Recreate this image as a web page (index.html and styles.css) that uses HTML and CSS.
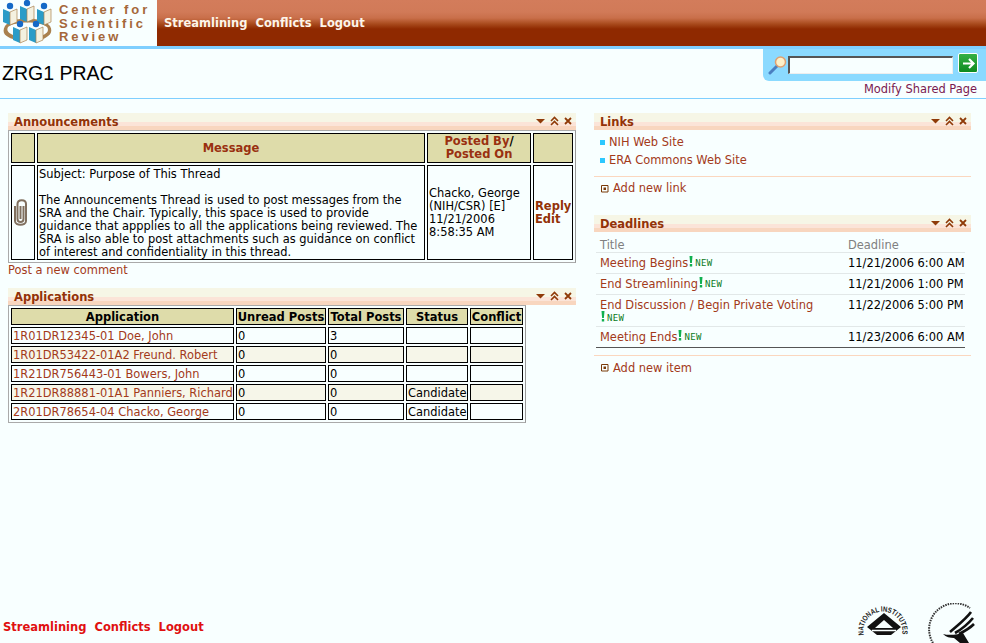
FILE: index.html
```html
<!DOCTYPE html>
<html lang="en">
<head>
<meta charset="utf-8">
<title>ZRG1 PRAC</title>
<link rel="stylesheet" href="styles.css">
</head>
<body>
<svg class="defs" width="0" height="0" aria-hidden="true">
  <defs>
    <g id="book">
      <path d="M0 3 L7 6 V19 L0 16Z" fill="#2a9cc8"/>
      <path d="M7 6 L14 3 V16 L7 19Z" fill="#f4f1e0" stroke="#a9814f" stroke-width=".7"/>
      <circle cx="7" cy="0" r="3.200" fill="#1569c7"/>
    </g>
    <g id="menu"><path d="M0 3h9l-4.500 4.500z" fill="#8f3a08"/></g>
    <g id="ups"><path d="M1 5l3.500-3.500L8 5M1 9l3.500-3.500L8 9" fill="none" stroke="#8f3a08" stroke-width="1.600"/></g>
    <g id="cls"><path d="M1 2l6 6M7 2l-6 6" fill="none" stroke="#8f3a08" stroke-width="1.800"/></g>
    <g id="plus"><path d="M.5.500h6.500v6.500h-6.500z" fill="none" stroke="#7b3a08"/><path d="M2.500 2.500h2.500v2.500h-2.500z" fill="#7b3a08"/></g>
    <g id="bang"><path d="M.5 0h3l-.6 7H1.100z M.8 8h2.400v2.500H.8z" fill="#10b050"/></g>
  </defs>
</svg>

<header class="topbar">
  <div class="logo">
    <svg class="logo-mark" width="54" height="46" viewBox="0 0 54 46">
      <path d="M5 26 C12 16 42 16 50 26 C54 33 48 37 43 39 L43 35 C48 33 49 30 47 27 C40 21 15 21 8 27 C6 31 9 33 13 35 L13 39 C6 37 1 33 5 26Z" fill="#a9814f"/>
      <use href="#book" x="3" y="6"/>
      <use href="#book" x="20" y="3"/>
      <use href="#book" x="37" y="6"/>
      <use href="#book" x="13" y="24"/>
      <use href="#book" x="29" y="24"/>
    </svg>
    <div class="logo-text">Center for<br>Scientific<br>Review</div>
  </div>
  <nav class="topnav">
    <a href="#">Streamlining</a>
    <a href="#">Conflicts</a>
    <a href="#">Logout</a>
  </nav>
</header>

<section class="titlebar">
  <h1 class="page-title">ZRG1 PRAC</h1>
  <div class="title-tools">
    <form class="search">
      <svg width="20" height="20" viewBox="0 0 20 20">
        <path d="M2 18 L9 11" stroke="#4a7fc0" stroke-width="3" stroke-linecap="round"/>
        <circle cx="12.500" cy="7" r="5" fill="#fdf0c8" stroke="#e0a070" stroke-width="1.500"/>
      </svg>
      <input class="search-input" type="text" aria-label="Search">
      <span class="go">
        <svg width="17" height="17" viewBox="0 0 17 17"><path d="M3 8.500h10M9 4l4.500 4.500L9 13" fill="none" stroke="#fff" stroke-width="2.200"/></svg>
      </span>
    </form>
    <a class="modify" href="#">Modify Shared Page</a>
  </div>
</section>

<main class="columns">
  <div class="col-left">
    <section class="part">
      <div class="part-head">
        <span>Announcements</span>
        <span class="part-icons">
          <svg width="9" height="10"><use href="#menu"/></svg>
          <svg width="9" height="10"><use href="#ups"/></svg>
          <svg width="9" height="10"><use href="#cls"/></svg>
        </span>
      </div>
      <div class="frame">
        <table class="grid ann">
          <tr class="ann-head">
            <th class="c-clip"></th>
            <th class="c-msg">Message</th>
            <th class="c-post">Posted By<span class="slash">/</span><br>Posted On</th>
            <th class="c-act"></th>
          </tr>
          <tr class="ann-row">
            <td class="clip">
              <svg width="15" height="27" viewBox="0 0 15 27">
                <path d="M2 7 V22 C2 27 13 27 13 22 V5 C13 0 4.500 0 4.500 5 V20 C4.500 24 10.500 24 10.500 20 V7 M7.500 7 V20" fill="none" stroke="#80705f" stroke-width="2"/>
              </svg>
            </td>
            <td>Subject: Purpose of This Thread<br><br>The Announcements Thread is used to post messages from the SRA and the Chair. Typically, this space is used to provide guidance that appplies to all the applications being reviewed. The SRA is also able to post attachments such as guidance on conflict of interest and confidentiality in this thread.</td>
            <td>Chacko, George (NIH/CSR) [E]<br>11/21/2006<br>8:58:35 AM</td>
            <td class="actions"><a href="#">Reply</a><br><a href="#">Edit</a></td>
          </tr>
        </table>
      </div>
      <a class="post-link" href="#">Post a new comment</a>
    </section>

    <section class="part part-apps">
      <div class="part-head">
        <span>Applications</span>
        <span class="part-icons">
          <svg width="9" height="10"><use href="#menu"/></svg>
          <svg width="9" height="10"><use href="#ups"/></svg>
          <svg width="9" height="10"><use href="#cls"/></svg>
        </span>
      </div>
      <div class="frame frame-apps">
        <table class="grid apps">
          <tr>
            <th class="a1">Application</th><th class="a2">Unread Posts</th><th class="a3">Total Posts</th><th class="a4">Status</th><th class="a5">Conflict</th>
          </tr>
          <tr><td><a href="#">1R01DR12345-01 Doe, John</a></td><td>0</td><td>3</td><td></td><td></td></tr>
          <tr class="alt"><td><a href="#">1R01DR53422-01A2 Freund. Robert</a></td><td>0</td><td>0</td><td></td><td></td></tr>
          <tr><td><a href="#">1R21DR756443-01 Bowers, John</a></td><td>0</td><td>0</td><td></td><td></td></tr>
          <tr class="alt"><td><a href="#">1R21DR88881-01A1 Panniers, Richard</a></td><td>0</td><td>0</td><td>Candidate</td><td></td></tr>
          <tr><td><a href="#">2R01DR78654-04 Chacko, George</a></td><td>0</td><td>0</td><td>Candidate</td><td></td></tr>
        </table>
      </div>
    </section>
  </div>

  <div class="col-right">
    <section class="part">
      <div class="part-head">
        <span>Links</span>
        <span class="part-icons">
          <svg width="9" height="10"><use href="#menu"/></svg>
          <svg width="9" height="10"><use href="#ups"/></svg>
          <svg width="9" height="10"><use href="#cls"/></svg>
        </span>
      </div>
      <ul class="links">
        <li><a href="#">NIH Web Site</a></li>
        <li><a href="#">ERA Commons Web Site</a></li>
      </ul>
      <div class="add-row">
        <svg width="8" height="8"><use href="#plus"/></svg>
        <a href="#">Add new link</a>
      </div>
    </section>

    <section class="part part-dead">
      <div class="part-head">
        <span>Deadlines</span>
        <span class="part-icons">
          <svg width="9" height="10"><use href="#menu"/></svg>
          <svg width="9" height="10"><use href="#ups"/></svg>
          <svg width="9" height="10"><use href="#cls"/></svg>
        </span>
      </div>
      <table class="deadlines">
        <tr><th class="d1">Title</th><th>Deadline</th></tr>
        <tr><td><a href="#">Meeting Begins</a><svg class="bang" width="4" height="11"><use href="#bang"/></svg><span class="new">NEW</span></td><td class="date">11/21/2006 6:00 AM</td></tr>
        <tr><td><a href="#">End Streamlining</a><svg class="bang" width="4" height="11"><use href="#bang"/></svg><span class="new">NEW</span></td><td class="date">11/21/2006 1:00 PM</td></tr>
        <tr class="wrap"><td><a href="#">End Discussion / Begin Private Voting</a><br><svg class="bang" width="4" height="11"><use href="#bang"/></svg><span class="new">NEW</span></td><td class="date">11/22/2006 5:00 PM</td></tr>
        <tr class="last"><td><a href="#">Meeting Ends</a><svg class="bang" width="4" height="11"><use href="#bang"/></svg><span class="new">NEW</span></td><td class="date">11/23/2006 6:00 AM</td></tr>
      </table>
      <div class="add-row">
        <svg width="8" height="8"><use href="#plus"/></svg>
        <a href="#">Add new item</a>
      </div>
    </section>
  </div>
</main>

<footer class="footer">
  <nav class="footnav">
    <a href="#">Streamlining</a>
    <a href="#">Conflicts</a>
    <a href="#">Logout</a>
  </nav>
  <div class="seals">
    <svg width="52" height="40" viewBox="0 0 52 40">
      <path id="nih-arc" d="M6.800 32 A19.500 19.500 0 1 1 45 32" fill="none"/>
      <text class="seal-text"><textPath href="#nih-arc" textLength="68" lengthAdjust="spacingAndGlyphs">NATIONAL INSTITUTES</textPath></text>
      <path d="M27 10 L44 24 L34 32 H20 L10 24Z M27 17 L18 25 H36Z" fill="#111" fill-rule="evenodd"/>
      <path d="M15 27.500 H39" stroke="#f8ffff" stroke-width="1.500"/>
    </svg>
    <svg width="50" height="40" viewBox="0 0 50 40">
      <path d="M7 40 A26 26 0 0 1 44 5" fill="none" stroke="#333" stroke-width="2" stroke-dasharray="1.500 1"/>
      <path d="M45 9 C40 16 32 22 24 29 M47 15 C42 21 36 26 29 30 M48 21 C44 25 39 28 33 31" fill="none" stroke="#111" stroke-width="2.600"/>
      <path d="M17 31 C24 33 33 31 37 30 L43 40 H34 L28 35 C24 35 20 34 17 31Z" fill="#111"/>
    </svg>
  </div>
</footer>
</body>
</html>
```
FILE: styles.css
```css
* { box-sizing: border-box; }
html, body { height: 100%; }
body {
  margin: 0;
  height: 643px;
  overflow: hidden;
  display: flex;
  flex-direction: column;
  background: #f8ffff;
  color: #000;
  font: 11.450px/13px "DejaVu Sans", Verdana, sans-serif;
}
a { color: #a33a1a; text-decoration: none; }
.defs { position: absolute; }

/* top bar */
.topbar {
  display: flex;
  height: 49px;
  flex: none;
  border-bottom: 3px solid #7fcfff;
  background: linear-gradient(#d37c5b 0, #d17a58 12px, #c96f4a 18px, #a84a1c 24px, #8f2900 29px, #8f2900 100%);
}
.logo {
  width: 157px;
  background: #f8ffff;
  display: flex;
  align-items: center;
}
.logo-mark { flex: none; }
.logo-text {
  margin: 1px 0 0 5px;
  color: #a5673a;
  font: bold 13px/13.500px "Liberation Sans", Arial, sans-serif;
  letter-spacing: 2.900px;
  white-space: nowrap;
}
.topnav {
  display: flex;
  gap: 8px;
  padding: 17px 0 0 7px;
}
.topnav a {
  color: #fdf5ea;
  font-weight: bold;
  font-size: 11.500px;
  line-height: 13px;
}

/* title row */
.titlebar {
  flex: none;
  height: 50px;
  display: flex;
  justify-content: space-between;
  border-bottom: 1px solid #7fcfff;
}
.page-title {
  margin: 14px 0 0 2px;
  font: normal 19.500px/21px "Liberation Sans", Arial, sans-serif;
}
.title-tools { display: flex; flex-direction: column; align-items: flex-end; }
.search {
  width: 223px;
  height: 32px;
  display: flex;
  align-items: center;
  background: #8bdaff;
  border-bottom-left-radius: 6px;
  padding: 0 8px 0 5px;
  margin: 0;
}
.search-input {
  width: 165px;
  height: 18px;
  padding: 0;
  border: 1px solid #eee;
  border-top: 2px solid #555;
  border-left: 2px solid #555;
  background: #f8ffff;
}
.go {
  width: 20px;
  height: 20px;
  margin: 0 0 4px 5px;
  background: linear-gradient(#35b045, #0e8a20);
  border: 1px solid #fff;
  border-radius: 2px;
  display: flex;
  align-items: center;
  justify-content: center;
}
.modify {
  margin-top: 2px;
  padding-right: 9px;
  color: #7a1a50;
}

/* columns */
.columns {
  display: flex;
  padding: 14px 15px 0 8px;
  gap: 18px;
}
.col-left { width: 568px; flex: none; }
.col-right { width: 377px; flex: none; }

.part-head {
  height: 17px;
  display: flex;
  justify-content: space-between;
  padding: 3px 3px 0 6px;
  color: #933208;
  font-weight: bold;
  font-size: 11.500px;
  line-height: 13px;
  background: linear-gradient(#f6f6e6 0, #f6f6e6 9px, #fbe4d8 9px, #fbe4d8 13px, #f8d6bf 13px, #f8d6bf 17px);
}
.part-icons { display: flex; gap: 5px; }

.frame {
  border: 1px solid #aaa;
  border-right-color: #999;
}
.frame-apps { width: 518px; }

.grid {
  border-collapse: separate;
  border-spacing: 2px;
  table-layout: fixed;
  width: 100%;
}
.grid th, .grid td {
  border: 1px solid #000;
  padding: 0 1px;
}
.grid th { background: #dedcaa; }

.ann th { color: #993010; font-size: 11.500px; }
.slash { color: #000; }
.ann-head th { height: 30px; }
.ann-row td { height: 95px; vertical-align: middle; }
.ann-row td:nth-child(2) { vertical-align: top; padding-top: 2px; }
.c-clip { width: 24px; }
.c-post { width: 104px; }
.c-act { width: 40px; }
.ann-row .clip { padding: 0 0 0 1px; }
.clip svg { display: block; }
.actions a { color: #933208; font-weight: bold; font-size: 11.500px; }
.post-link { display: block; margin-top: 1px; }

.part-apps { margin-top: 11px; }
.grid.apps td { height: 17px; padding: 1px 1px 0; white-space: nowrap; overflow: hidden; }
.grid.apps th { height: 17px; white-space: nowrap; font-size: 11.500px; padding: 1px 0 0; }
.apps .alt td { background: #f6f6e9; }
.a1 { width: 223px; }
.a2 { width: 90px; }
.a3 { width: 76px; }
.a4 { width: 62px; }
.a5 { width: 53px; }

/* links */
.links {
  list-style: none;
  margin: 0;
  padding: 3px 0 0 6px;
  border-bottom: 1px solid #fbd7bf;
  height: 47px;
}
.links li { height: 18px; line-height: 18px; padding-left: 9px; position: relative; }
.links li::before {
  content: "";
  position: absolute;
  left: 0;
  top: 7px;
  width: 5px;
  height: 5px;
  background: #2cc8ff;
}
.add-row {
  display: flex;
  align-items: center;
  gap: 4px;
  padding: 3px 0 0 7px;
  height: 20px;
}
.part-dead { margin-top: 18px; }

/* deadlines */
.deadlines {
  border-collapse: collapse;
  margin: 6px 0 0 2px;
  width: 369px;
  table-layout: fixed;
  border-bottom: 1px solid #555;
}
.deadlines th {
  font-weight: normal;
  color: #808080;
  text-align: left;
  padding: 1px 0 0 4px;
  border-bottom: 1px solid #e2e8e8;
}
.d1 { width: 248px; }
.deadlines td {
  border-bottom: 1px solid #e2e8e8;
  padding: 4px 0 3px 4px;
  vertical-align: top;
}
.deadlines .wrap td { padding-bottom: 1px; }
.deadlines .last td { border-bottom: 0; }
.date { white-space: nowrap; }
.bang { margin: 0 2px 0 1px; vertical-align: top; position: relative; top: -1px; }
.new {
  display: inline-block;
  vertical-align: top;
  color: #0a7a1a;
  font: 9px/13px "DejaVu Sans Mono", monospace;
  letter-spacing: .3px;
}
.part-dead .add-row { border-top: 1px solid #fbd7bf; margin-top: 7px; padding-top: 3px; height: 22px; }

/* footer */
.footer {
  margin-top: auto;
  display: flex;
  justify-content: space-between;
  align-items: flex-end;
  height: 40px;
}
.footnav { display: flex; gap: 8px; padding: 0 0 9px 3px; }
.footnav a { color: #e01010; font-weight: bold; font-size: 11.500px; }
.seals { display: flex; gap: 17px; padding-right: 10px; }
.seal-text { font: bold 7.500px "Liberation Sans", Arial, sans-serif; fill: #222; }
```
